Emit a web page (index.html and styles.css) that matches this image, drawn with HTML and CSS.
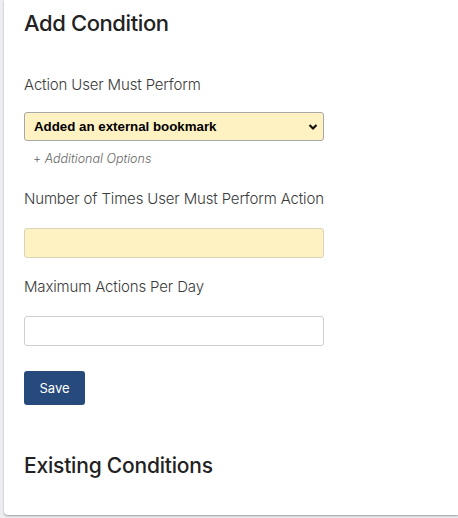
FILE: index.html
```html
<!DOCTYPE html>
<html>
<head>
<meta charset="utf-8">
<link rel="stylesheet" href="styles.css">
</head>
<body>
<div class="card">
  <h2 class="title">Add Condition</h2>
  <div class="field">
    <label class="label">Action User Must Perform</label>
    <div class="select-wrap">
      <div class="select">
        <span>Added an external bookmark</span>
        <svg class="chev" width="10" height="8" viewBox="0 0 10 8"><path d="M1.5 2 L5 5.5 L8.5 2" fill="none" stroke="#111" stroke-width="2.2"/></svg>
      </div>
    </div>
    <div class="more">+ <em>Additional Options</em></div>
  </div>
  <div class="field">
    <label class="label">Number of Times User Must Perform Action</label>
    <div class="input yellow"></div>
  </div>
  <div class="field">
    <label class="label">Maximum Actions Per Day</label>
    <div class="input"></div>
  </div>
  <button class="btn">Save</button>
  <h2 class="title2">Existing Conditions</h2>
</div>
</body>
</html>
```
FILE: styles.css
```css
html, body { margin: 0; padding: 0; }
body {
  background: #eceef1;
  font-family: Inter, "Noto Sans", sans-serif;
  color: #2a2a2a;
  width: 458px;
  height: 518px;
  overflow: hidden;
}
.card {
  margin-left: 4px;
  background: #fff;
  height: 515px;
  box-sizing: border-box;
  padding: 10px 0 0 20px;
  border-radius: 0 0 0 4px;
  box-shadow: 0 1px 2px rgba(0,0,0,0.35);
}
.title {
  margin: 0;
  font-size: 22px;
  font-weight: 500;
  letter-spacing: -0.4px;
  color: #222;
  line-height: 26px;
}
.label {
  display: block;
  font-size: 15px;
  font-weight: 300;
  letter-spacing: -0.15px;
  color: #3a3a3a;
  line-height: 18px;
}
.card > .field:nth-child(2) { padding-top: 40px; }
.select-wrap { margin-top: 18px; }
.select {
  width: 300px;
  height: 29px;
  box-sizing: border-box;
  background: #fff2c2;
  border: 1px solid #a8a8a8;
  border-radius: 3px;
  display: flex;
  align-items: center;
  justify-content: space-between;
  padding: 0 3px 0 9px;
  font-family: "Liberation Sans", Arial, sans-serif;
  font-weight: bold;
  font-size: 13.3px;
  color: #000;
}
.chev { margin-right: 2px; }
.more {
  margin: 10px 0 0 9px;
  font-size: 12.5px;
  font-weight: 300;
  color: #666;
  line-height: 16px;
}
.more em { font-style: italic; }
.card > .field:nth-child(3) { padding-top: 23px; }
.card > .field:nth-child(4) { padding-top: 20px; }
.input {
  margin-top: 20px;
  width: 300px;
  height: 30px;
  box-sizing: border-box;
  border: 1px solid #cfcfcf;
  border-radius: 3px;
  background: #fff;
}
.input.yellow { background: #fff2c2; border-color: #d9d3b8; }
.btn {
  display: block;
  margin-top: 25px;
  width: 61px;
  height: 34px;
  background: #264a7b;
  color: #fff;
  border: none;
  border-radius: 3px;
  font-family: Inter, sans-serif;
  font-size: 13px;
  padding: 0;
}
.title2 {
  margin: 49px 0 0;
  font-size: 21px;
  font-weight: 500;
  letter-spacing: -0.2px;
  color: #222;
  line-height: 24px;
}
```
